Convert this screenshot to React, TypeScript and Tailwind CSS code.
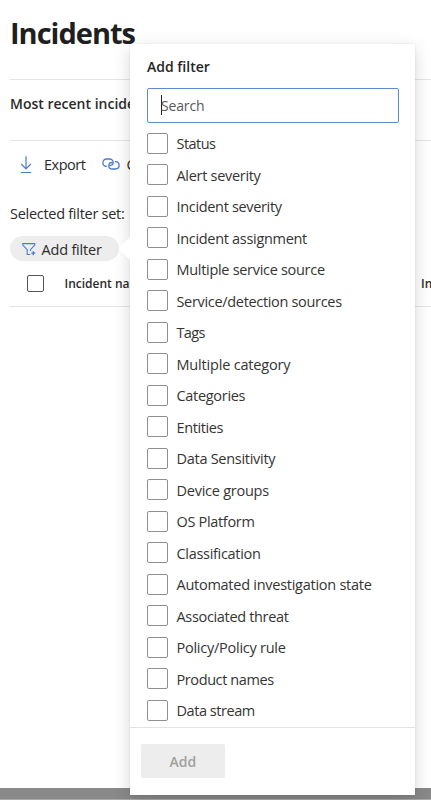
import React from "react";

const filters: { label: string; tracking: string }[] = [
  { label: "Status", tracking: "tracking-[-0.55px]" },
  { label: "Alert severity", tracking: "tracking-[-0.3px]" },
  { label: "Incident severity", tracking: "tracking-[-0.33px]" },
  { label: "Incident assignment", tracking: "tracking-[-0.31px]" },
  { label: "Multiple service source", tracking: "tracking-[-0.3px]" },
  { label: "Service/detection sources", tracking: "tracking-[-0.32px]" },
  { label: "Tags", tracking: "tracking-[-0.6px]" },
  { label: "Multiple category", tracking: "tracking-[-0.18px]" },
  { label: "Categories", tracking: "tracking-[-0.3px]" },
  { label: "Entities", tracking: "tracking-[-0.4px]" },
  { label: "Data Sensitivity", tracking: "tracking-[-0.28px]" },
  { label: "Device groups", tracking: "tracking-[-0.25px]" },
  { label: "OS Platform", tracking: "tracking-[-0.32px]" },
  { label: "Classification", tracking: "tracking-[-0.3px]" },
  { label: "Automated investigation state", tracking: "tracking-[-0.26px]" },
  { label: "Associated threat", tracking: "tracking-[-0.33px]" },
  { label: "Policy/Policy rule", tracking: "tracking-[-0.25px]" },
  { label: "Product names", tracking: "tracking-[-0.4px]" },
  { label: "Data stream", tracking: "tracking-[-0.45px]" },
];

function DownloadIcon() {
  return (
    <svg width="12" height="18" viewBox="0 0 12 18" fill="none" stroke="#4a7bd0" strokeWidth="1.2">
      <path d="M6 .3v12.4M1.2 8L6 12.8 10.8 8M.8 16.5h10.4" />
    </svg>
  );
}

function LinkIcon() {
  return (
    <svg width="18" height="12" viewBox="0 0 18 12" fill="none" stroke="#4a7bd0" strokeWidth="1.3" strokeLinecap="round">
      <path d="M4.6 8.3C2.4 8.2.9 6.7.9 4.7.9 2.6 2.5 1 4.6 1h2.9c2.1 0 3.7 1.4 3.7 3.3 0 2-1.4 3.2-3.3 3.2" />
      <path d="M13.4 3.7c2.2.1 3.7 1.6 3.7 3.6 0 2.1-1.6 3.7-3.7 3.7h-2.9c-2.1 0-3.7-1.4-3.7-3.3 0-2 1.4-3.2 3.3-3.2" />
    </svg>
  );
}

function FilterAddIcon() {
  return (
    <svg width="14" height="14" viewBox="0 0 14 14" fill="none" stroke="#4a7bd0" strokeWidth="1.1">
      <path d="M8.4 12.5H5.2V7.7L.8 3.1V1.6h11.9v1.5L8.5 7.7v1.4" />
      <path d="M11.3 9.2v4M9.3 11.2h4" strokeWidth="1.3" />
    </svg>
  );
}

function FilterPanel() {
  return (
    <div className="absolute left-[130.4px] top-[44px] flex h-[751px] w-[285px] flex-col bg-white shadow-[0_5px_16px_rgba(0,0,0,0.16),0_0_2px_rgba(0,0,0,0.08)]">
      <span className="absolute left-[-8.5px] top-[196px] h-[17px] w-[17px] rotate-45 bg-white" />
      <h2 className="ml-[16.6px] mt-[12.6px] h-[20px] whitespace-nowrap text-[14px] font-semibold leading-[20px] text-[#242424]">Add filter</h2>
      <div className="ml-[16.6px] mt-[11.4px] flex h-[35px] w-[252px] shrink-0 items-center rounded-[2px] border-[1.5px] border-[#6088d4] pl-[13px]">
        <span className="h-[20px] w-px bg-[#222]" />
        <span className="-ml-px mt-px text-[14px] leading-[20px] tracking-[-0.15px] text-[#58585a]">Search</span>
      </div>
      <ul className="ml-[16.6px] mt-[4.6px] flex flex-col">
        {filters.map((f) => (
          <li key={f.label} className="flex h-[31.5px] items-center">
            <span className="h-[21px] w-[21px] shrink-0 rounded-[2px] border border-[#8f8f8f] bg-white" />
            <span className={`ml-[8.5px] mt-[2px] whitespace-nowrap text-[14.5px] leading-[20px] text-[#353433] ${f.tracking}`}>{f.label}</span>
          </li>
        ))}
      </ul>
      <div className="mt-auto h-[68px] shrink-0 border-t border-[#e3e3e3] pl-[10.5px] pt-[16px]">
        <div className="flex h-[34px] w-[84px] items-center justify-center rounded-[2px] bg-[#ededed] pt-px text-[14px] font-semibold text-[#a0a0a0]">Add</div>
      </div>
    </div>
  );
}

export default function App() {
  return (
    <div className="relative flex h-[800px] w-[431px] flex-col overflow-hidden bg-white font-['Open_Sans','Noto_Sans',sans-serif] text-[#2b2b2b]">
      <h1 className="ml-[10px] mt-[13px] h-[40px] text-[29px] font-bold leading-[40px] tracking-[-1px] text-[#1f1f1f]">Incidents</h1>
      <div className="ml-[10px] mt-[26px] h-[61px] border-t border-[#e4e4e4] pt-[14px]">
        <div className="whitespace-nowrap text-[14px] font-semibold leading-[20px]">Most recent incidents and alerts</div>
      </div>
      <div className="ml-[10px] flex h-[49px] items-center border-t border-[#e4e4e4] pl-[10px] text-[14.5px]">
        <DownloadIcon />
        <span className="ml-[12px] w-[42px] tracking-[-0.5px]">Export</span>
        <span className="ml-[15.5px] mt-[-2px]"><LinkIcon /></span>
        <span className="ml-[7px]">Copy</span>
      </div>
      <div className="ml-[10px] mt-[15px] h-[20px] whitespace-nowrap text-[14.5px] leading-[20px] tracking-[-0.28px]">Selected filter set:</div>
      <div className="ml-[10px] mt-[12px] flex h-[25px] w-[109px] items-center rounded-full bg-[#ededed] pl-[12px]">
        <FilterAddIcon />
        <span className="ml-[5.5px] mt-[2px] whitespace-nowrap text-[14.5px] leading-[20px] tracking-[-0.2px]">Add filter</span>
      </div>
      <div className="ml-[10px] flex h-[46px] items-center border-b border-[#e4e4e4] pl-[17px] text-[12px] font-semibold">
        <span className="h-[17px] w-[17px] shrink-0 rounded-[2px] border border-[#555]" />
        <span className="ml-[20.5px] mt-px w-[356.5px] shrink-0 whitespace-nowrap">Incident name</span>
        <span className="mt-px whitespace-nowrap">Incident Id</span>
      </div>
      <div className="mt-auto h-[12px] border-b border-[#aaa] bg-[#898989]" />
      <FilterPanel />
    </div>
  );
}
